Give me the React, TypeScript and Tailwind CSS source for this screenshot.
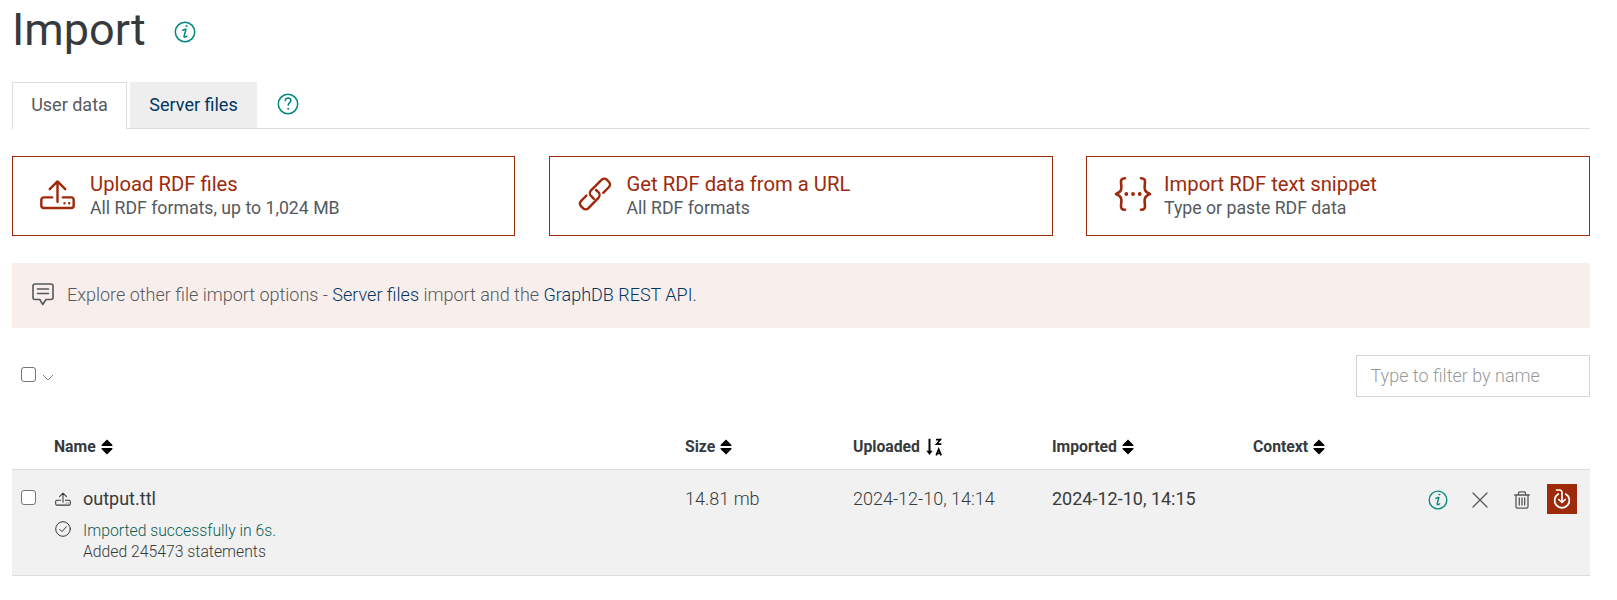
import type { ReactNode } from "react";

function InfoIcon({ className }: { className: string }) {
  return (
    <svg viewBox="0 0 22 22" fill="none" stroke="currentColor" strokeLinecap="round" strokeLinejoin="round" className={className}>
      <circle cx="11" cy="11" r="9.7" strokeWidth="1.5" />
      <path d="M8.7 9.300c1-.6 2.200-.9 3.300-1l-1.900 6.700c-.3 1.500 1.100 1.600 2.800.2" strokeWidth="1.5" />
      <circle cx="12.300" cy="5" r=".6" strokeWidth="1" />
    </svg>
  );
}

function HelpIcon() {
  return (
    <svg viewBox="0 0 22 22" fill="none" stroke="currentColor" strokeLinecap="round" strokeLinejoin="round" className="size-[22px]">
      <circle cx="11" cy="11" r="9.7" strokeWidth="1.5" />
      <path d="M8.200 7.600c.2-1.700 1.400-2.700 2.900-2.700 1.600 0 2.800 1.100 2.800 2.600 0 2-2.700 2.300-2.700 4.700" strokeWidth="1.5" />
      <circle cx="11.100" cy="15.800" r=".6" strokeWidth="1" />
    </svg>
  );
}

function UploadIcon({ className, strokeWidth }: { className: string; strokeWidth: number }) {
  return (
    <svg viewBox="0 0 36 32" fill="none" stroke="currentColor" strokeWidth={strokeWidth} strokeLinecap="round" strokeLinejoin="round" className={className}>
      <path d="M18 23.500V2.500M10 10.500l8-8 8 8" />
      <path d="M12.500 19H4a2.700 2.700 0 0 0-2.700 2.700v5.600A2.700 2.700 0 0 0 4 30h28a2.700 2.700 0 0 0 2.700-2.700v-5.600A2.700 2.700 0 0 0 32 19h-8.500" />
      <path d="M25.200 25h.01M30 25h.01" />
    </svg>
  );
}

function LinkIcon() {
  return (
    <svg viewBox="0 0 34 36" fill="none" stroke="currentColor" strokeWidth="2.4" strokeLinecap="round" strokeLinejoin="round" className="mb-[2px] ml-px h-9 w-[34px]">
      <path d="M8.500 19.500l-5.600 5.600a3.600 3.600 0 0 0 0 5l2.300 2.300a3.600 3.600 0 0 0 5 0l10.200-10.600a4 4 0 0 0 0-5.600l-2.400-2.200" />
      <path d="M25.300 16.800l5.700-5.800a3.600 3.600 0 0 0 0-5l-2.200-2.300a3.600 3.600 0 0 0-5 0L13 14.300a4 4 0 0 0 0 5.600l2.900 2.900" />
    </svg>
  );
}

function BracesIcon() {
  return (
    <svg viewBox="0 0 38 36" fill="none" stroke="currentColor" strokeWidth="2.600" strokeLinecap="round" strokeLinejoin="round" className="mb-px h-9 w-[38px]">
      <path d="M11 2.200C7.500 2.200 6.600 4 7.100 7.500c.6 4.300 1.200 8.300-5.100 10.500 6.300 2.200 5.700 6.200 5.100 10.500-.5 3.500.4 5.300 3.900 5.300" />
      <path d="M27 2.200c3.500 0 4.400 1.800 3.900 5.300-.6 4.300-1.200 8.300 5.100 10.500-6.300 2.200-5.700 6.200-5.100 10.500.5 3.500-.4 5.300-3.900 5.300" />
      <path d="M12.300 18h.01M19 18h.01M25.700 18h.01" strokeWidth="3.800" />
    </svg>
  );
}

function SortIcon() {
  return (
    <svg viewBox="0 0 12 16" fill="currentColor" className="h-4 w-3 text-black">
      <path d="M6 .5l5.300 5.300c.5.500.2 1.200-.5 1.200H1.200C.5 7 .2 6.300.7 5.800zM6 15.500L.7 10.200C.2 9.700.5 9 1.200 9h9.600c.7 0 1 .7.5 1.200z" />
    </svg>
  );
}

function SortDescIcon() {
  return (
    <svg viewBox="0 0 17 18" fill="none" stroke="currentColor" className="ml-px h-[18px] w-[17px] text-black">
      <path d="M3.500.8v14" strokeWidth="2" />
      <path d="M.3 12.800h6.400L3.500 17z" fill="currentColor" stroke="none" />
      <path d="M10 1.700h4.300l-3.700 4.400h4.800M10.200 17.300l2.500-6 2.500 6M11.200 15.500h3" strokeWidth="1.700" />
    </svg>
  );
}

function Card({ icon, title, text }: { icon: ReactNode; title: string; text: string }) {
  return (
    <button className="flex h-20 items-center border border-[#9d2a0b] pl-[27px] text-left">
      <span className="flex w-[38px] pb-[3px] text-[#9d2a0b]">{icon}</span>
      <span className="flex flex-col pl-[12px]">
        <span className="text-[20.25px] leading-6 text-[#9d2a0b]">{title}</span>
        <span className="text-[17.7px] leading-6 text-[#555a5e]">{text}</span>
      </span>
    </button>
  );
}

function Checkbox() {
  return <input type="checkbox" className="block size-[15px] appearance-none rounded-[3px] border border-[#767676] bg-white" />;
}

function Th({ label, icon }: { label: string; icon?: ReactNode }) {
  return (
    <div className="flex items-center gap-[5px]">
      {label}
      {icon ?? <SortIcon />}
    </div>
  );
}

const columns = "grid grid-cols-[42px_631px_168px_199px_201px_1fr]";

export default function App() {
  return (
    <main className="h-[600px] overflow-hidden bg-white pr-[27px] pl-3 font-['Roboto',sans-serif] text-[#373a3c]">
      <header className="flex h-[82px] items-start">
        <h1 className="w-[162px] text-[45px] leading-[59px]">Import</h1>
        <InfoIcon className="mt-[21px] size-[22px] text-[#02887d]" />
      </header>

      <nav className="flex h-[47px] text-[18px]">
        <a className="flex w-[115px] items-center justify-center border border-b-0 border-[#ddd] pb-[3px] text-[#55595c]">User data</a>
        <span className="w-[3px] border-b border-[#ddd]" />
        <a className="flex w-[127px] items-center justify-center border-b border-[#ddd] bg-[#eee] pb-[2px] text-[#003663]">Server files</a>
        <span className="flex grow items-center border-b border-[#ddd] pb-[2px] pl-[20px] text-[#02887d]">
          <HelpIcon />
        </span>
      </nav>

      <section className="mt-[27px] grid grid-cols-[503px_504px_504px] justify-between">
        <Card icon={<UploadIcon className="mb-px h-[31px] w-[35px]" strokeWidth={2.5} />} title="Upload RDF files" text="All RDF formats, up to 1,024 MB" />
        <Card icon={<LinkIcon />} title="Get RDF data from a URL" text="All RDF formats" />
        <Card icon={<BracesIcon />} title="Import RDF text snippet" text="Type or paste RDF data" />
      </section>

      <section className="mt-[27px] flex h-[65px] items-center bg-[#f8efed] pl-5 text-[18px] font-light text-[#55595c]">
        <svg viewBox="0 0 22 23" fill="none" stroke="currentColor" strokeWidth="1.600" strokeLinecap="round" strokeLinejoin="round" className="mr-[13px] mb-[2px] h-[23px] w-[22px]">
          <path d="M3 1h16a2 2 0 0 1 2 2v11.500a2 2 0 0 1-2 2h-5l-3.200 5-3-5H3a2 2 0 0 1-2-2V3a2 2 0 0 1 2-2zM5.500 6h11M5.500 10.500h11" />
        </svg>
        <p className="pb-[2px]">
          Explore other file import options - <a className="text-[#003663]">Server files</a> import and the <a className="text-[#003663]">GraphDB REST API.</a>
        </p>
      </section>

      <div className="mt-[27px] flex h-[42px] items-start justify-between pl-[9px]">
        <div className="flex items-start pt-3">
          <Checkbox />
          <svg viewBox="0 0 12 8" fill="none" stroke="#888" className="mt-[7px] ml-[6px] h-2 w-3">
            <path d="M1 1l5 5 5-5" />
          </svg>
        </div>
        <input placeholder="Type to filter by name" className="h-[42px] w-[234px] border border-[#d5d5d5] pr-[14px] pb-[2px] pl-[13.500px] text-[18px] font-light placeholder:text-[#999]" />
      </div>

      <section className="mt-[27px]">
        <div className={`${columns} h-[46px] border-b border-[#ddd] pt-px text-[15.75px] font-bold`}>
          <span />
          <Th label="Name" />
          <Th label="Size" />
          <Th label="Uploaded" icon={<SortDescIcon />} />
          <Th label="Imported" />
          <Th label="Context" />
        </div>
        <div className={`${columns} h-[106px] border-b border-[#ddd] bg-[#f1f1f1] pt-[15px] text-[18px] leading-[28px] font-light`}>
          <div className="pt-[5px] pl-[9px]">
            <Checkbox />
          </div>
          <div>
            <div className="flex items-center font-normal">
              <UploadIcon className="mr-[12px] ml-px h-[14px] w-4" strokeWidth={2.4} />
              output.ttl
            </div>
            <div className="flex pt-[7px] text-[15.75px] leading-[21px]">
              <svg viewBox="0 0 16 16" fill="none" stroke="currentColor" strokeLinecap="round" strokeLinejoin="round" className="mt-px mr-[12px] ml-px size-4">
                <circle cx="8" cy="8" r="7.300" />
                <path d="M4.800 8.400l2.200 2.300 4.400-5" />
              </svg>
              <div>
                <div className="text-[#0b5e57]">Imported successfully in 6s.</div>
                <div>Added 245473 statements</div>
              </div>
            </div>
          </div>
          <div>14.81 mb</div>
          <div>2024-12-10, 14:14</div>
          <div className="font-normal">2024-12-10, 14:15</div>
          <div className="-mt-px flex h-[30px] items-center justify-end pr-[13px] text-[#55595c]">
            <InfoIcon className="mt-[2px] mr-[24px] size-[20px] text-[#02887d]" />
            <svg viewBox="0 0 16 16" fill="none" stroke="currentColor" strokeWidth="1.300" strokeLinecap="round" className="mt-[2px] mr-[26px] size-4">
              <path d="M1 1l14 14M15 1L1 15" />
            </svg>
            <svg viewBox="0 0 16 18" fill="none" stroke="currentColor" strokeWidth="1.300" strokeLinecap="round" strokeLinejoin="round" className="mt-[2px] mr-[17px] h-[18px] w-4">
              <path d="M.7 4h14.600M2 4v11.500a1.700 1.700 0 0 0 1.700 1.700h8.600a1.700 1.700 0 0 0 1.700-1.700V4M4.500 4V2a1.200 1.200 0 0 1 1.200-1.200h4.600A1.200 1.200 0 0 1 11.500 2v2M5.300 7v7M8 7v7M10.700 7v7" />
            </svg>
            <button className="flex size-[30px] items-center justify-center bg-[#9d2a0b] text-white">
              <svg viewBox="0 0 18 20" fill="none" stroke="currentColor" strokeWidth="1.700" strokeLinecap="round" strokeLinejoin="round" className="h-5 w-[18px]">
                <path d="M5.300 5A7.400 7.400 0 1 0 12.700 5M3.500 1h3A2.500 2.500 0 0 1 9 3.500v9.800M5.800 10.500L9 13.500l3.200-3" />
              </svg>
            </button>
          </div>
        </div>
      </section>
    </main>
  );
}
